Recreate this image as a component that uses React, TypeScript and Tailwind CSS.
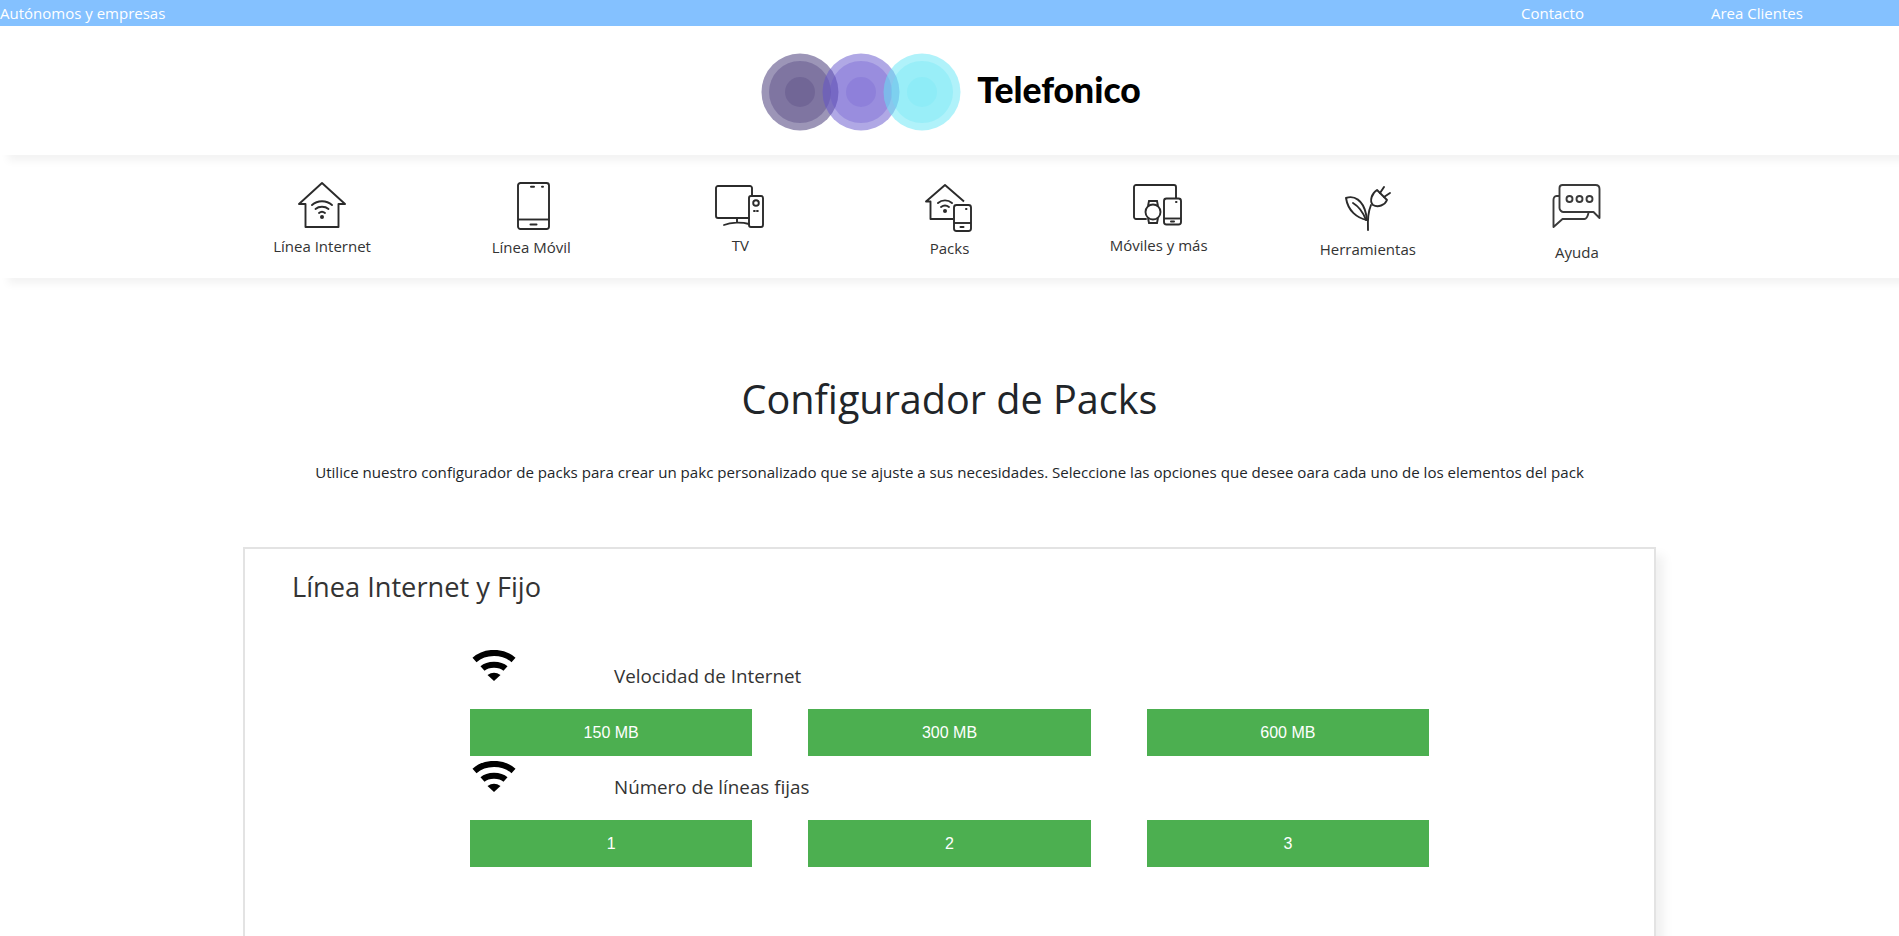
const uiFont = "font-['Open_Sans',sans-serif]";

function HouseWifiIcon() {
  return (
    <svg width="48" height="46" viewBox="0 0 48 46" fill="none" stroke="#2b2b2b" strokeWidth="1.9">
      <path d="M1 22 24 1l23 21h-6.500v23h-33V22z" strokeLinejoin="round" />
      <path d="M14 23c5.500-5 14.500-5 20 0M17.500 27c3.500-3 9.500-3 13 0M21 31c1.800-1.500 4.200-1.500 6 0" strokeLinecap="round" />
      <circle cx="24" cy="35" r="2" fill="#2b2b2b" stroke="none" />
    </svg>
  );
}

function PhoneIcon() {
  return (
    <svg width="33" height="48" viewBox="0 0 33 48" fill="none" stroke="#2b2b2b" strokeWidth="1.9" className="ml-[4px]">
      <rect x="1" y="1" width="31" height="46" rx="2.500" />
      <path d="M1 37.500h31" />
      <path d="M13.500 42.500h6M14 4.800h3M25 4.800h1" strokeLinecap="round" strokeWidth="2" />
    </svg>
  );
}

function TvIcon() {
  return (
    <svg width="49" height="43" viewBox="0 0 49 43" fill="none" stroke="#2b2b2b" strokeWidth="1.9" className="-ml-[2px]">
      <path d="M37 10V3c0-1-1-2-2-2H3C2 1 1 2 1 3v28c0 1 1 2 2 2h31" strokeLinecap="round" />
      <path d="M22 33v4M9 40c7-3 18-3 25-1" strokeLinecap="round" />
      <rect x="34" y="11" width="14" height="31" rx="2" />
      <circle cx="41" cy="18" r="2.800" />
      <path d="M39 26h.800M42 26h.800" strokeLinecap="round" strokeWidth="2" />
    </svg>
  );
}

function PacksIcon() {
  return (
    <svg width="48" height="48" viewBox="0 0 48 48" fill="none" stroke="#2b2b2b" strokeWidth="1.9">
      <path d="M28 35H5.500V17.500H1L20 1l19 16.500" strokeLinejoin="round" />
      <path d="M13 19c4-3.500 10-3.500 14 0M16 23c2.500-2 5.500-2 8 0" strokeLinecap="round" />
      <circle cx="20" cy="27" r="2" fill="#2b2b2b" stroke="none" />
      <rect x="29" y="21" width="17" height="26" rx="2.500" fill="#fff" />
      <path d="M29 39h17" />
      <path d="M35.500 43h3M41 25h.500" strokeLinecap="round" strokeWidth="2" />
    </svg>
  );
}

function DevicesIcon() {
  return (
    <svg width="49" height="42" viewBox="0 0 49 42" fill="none" stroke="#2b2b2b" strokeWidth="1.9" className="-ml-[2px]">
      <path d="M13 35H3c-1 0-2-1-2-2V3c0-1 1-2 2-2h38c1 0 2 1 2 2v11" strokeLinecap="round" />
      <circle cx="20" cy="28" r="7.500" fill="#fff" />
      <path d="M15 22l1-5h8l1 5M15 34l1 5h8l1-5" />
      <rect x="31" y="14.500" width="17" height="26" rx="2.500" fill="#fff" />
      <path d="M31 34.500h17" />
      <path d="M38 37.500h3M43 18h.500" strokeLinecap="round" strokeWidth="2" />
    </svg>
  );
}

function PlugLeafIcon() {
  return (
    <svg width="46" height="46" viewBox="0 0 46 46" fill="none" stroke="#2b2b2b" strokeWidth="1.9">
      <path d="M23 45c-.500-10 0-18 3-25" strokeLinecap="round" />
      <path d="M1 13c8-3 17 2 20 16l1 6C12 33 3 26 1 13z" strokeLinejoin="round" />
      <path d="M8 18c5 3 10 9 13 17" strokeLinecap="round" />
      <path d="M32 5 42 15c-2 5-9 8-14 5-4-4-1-12 4-15z" strokeLinejoin="round" />
      <path d="M35 8l4-6M39 12l6-4" strokeLinecap="round" />
    </svg>
  );
}

function ChatIcon() {
  return (
    <svg width="51" height="45" viewBox="0 0 50 45" fill="none" stroke="#3a3a3a" strokeWidth="1.9">
      <path d="M8 4c0-2 1-3 3-3h33c3 0 4 2 4 4v29l-6-6H12c-2 0-4-2-4-4V4z" strokeLinejoin="round" />
      <path d="M8 12H5c-2 0-3 2-3 4v27l9-8h22c2 0 3-2 4-6" strokeLinejoin="round" />
      <circle cx="18" cy="15" r="3" />
      <circle cx="28" cy="15" r="3" />
      <circle cx="38" cy="15" r="3" />
    </svg>
  );
}

function WifiIcon() {
  return (
    <svg width="44" height="31" viewBox="0 0 44 31" fill="none" stroke="#000" strokeWidth="6" className="block">
      <path d="M2.500 10C13 .500 31 .500 41.500 10" />
      <path d="M10.500 18.500C16 13.500 28 13.500 33.500 18.500" />
      <path d="M22 31 15.500 25Q22 20.500 28.500 25Z" fill="#000" stroke="none" />
    </svg>
  );
}

function Logo() {
  const circles = [
    { cx: 39, fill: "#3a2b70" },
    { cx: 100, fill: "#6251cc" },
    { cx: 161, fill: "#62e6f5" },
  ];
  return (
    <svg width="200" height="78" viewBox="0 0 200 78">
      {circles.map((c) => (
        <g key={c.cx} fill={c.fill}>
          <circle cx={c.cx} cy="39" r="38.500" opacity="0.5" />
          <circle cx={c.cx} cy="39" r="31" opacity="0.3" />
          <circle cx={c.cx} cy="39" r="15" opacity="0.2" />
        </g>
      ))}
    </svg>
  );
}

const navItems = [
  { label: "Línea Internet", icon: <HouseWifiIcon />, cls: "pt-[27px]", labelCls: "mt-[8px]" },
  { label: "Línea Móvil", icon: <PhoneIcon />, cls: "pt-[27px]", labelCls: "mt-[7px]" },
  { label: "TV", icon: <TvIcon />, cls: "pt-[30px]", labelCls: "mt-[7px]" },
  { label: "Packs", icon: <PacksIcon />, cls: "pt-[29px]", labelCls: "mt-[6px]" },
  { label: "Móviles y más", icon: <DevicesIcon />, cls: "pt-[29px]", labelCls: "mt-[9px]" },
  { label: "Herramientas", icon: <PlugLeafIcon />, cls: "pt-[30px]", labelCls: "mt-[8px]" },
  { label: "Ayuda", icon: <ChatIcon />, cls: "pt-[29px]", labelCls: "mt-[13px]" },
];

function OptionRow({ title, options }: { title: string; options: string[] }) {
  return (
    <div className="ml-[178px] w-[959px]">
      <div className="flex h-[64px] items-start">
        <div className="w-[144px] pl-[2px] pt-[5px]">
          <WifiIcon />
        </div>
        <span className="mt-[19px] text-[18.8px] leading-[24px] text-[#333]">{title}</span>
      </div>
      <div className="grid grid-cols-3 gap-x-[56px]">
        {options.map((o) => (
          <button
            key={o}
            type="button"
            className="h-[47px] bg-[#4caf50] font-['Liberation_Sans',sans-serif] text-base text-white"
          >
            {o}
          </button>
        ))}
      </div>
    </div>
  );
}

export default function App() {
  return (
    <div className={`h-screen overflow-hidden bg-white text-[#212529] ${uiFont}`}>
      <div className="flex h-[26px] items-center justify-between bg-[#84c1ff] text-[15px] text-white">
        <span>Autónomos y empresas</span>
        <div className="flex">
          <span className="w-[190px]">Contacto</span>
          <span className="w-[188px]">Area Clientes</span>
        </div>
      </div>

      <header className="relative z-10 flex h-[129px] items-center justify-center gap-[16px] bg-white pl-[3px] pt-[3px] shadow-[8px_6px_8px_rgba(0,0,0,0.05)]">
        <Logo />
        <span className="mb-[4px] font-['Lato',sans-serif] text-[35.5px] font-black leading-none text-black">Telefonico</span>
      </header>

      <nav className="flex h-[123px] justify-center bg-white shadow-[8px_6px_8px_rgba(0,0,0,0.05)]">
        <div className="grid w-[1464px] grid-cols-7">
          {navItems.map((item) => (
            <div key={item.label} className={`flex flex-col items-center ${item.cls}`}>
              {item.icon}
              <span className={`text-[15px] leading-[20px] text-[#333] ${item.labelCls}`}>{item.label}</span>
            </div>
          ))}
        </div>
      </nav>

      <main className="flex flex-col items-center">
        <h1 className="mt-[97px] text-[39.6px] leading-[48px]">Configurador de Packs</h1>
        <p className="mt-[38px] text-[15.1px] leading-[22px]">
          Utilice nuestro configurador de packs para crear un pakc personalizado que se ajuste a sus necesidades. Seleccione las opciones que desee oara cada uno de los elementos del pack
        </p>
        <section className="mt-[64px] h-[600px] w-[1413px] border-2 border-[#e3e3e3] pl-[47px] pt-[18px] shadow-[8px_8px_10px_rgba(0,0,0,0.06)]">
          <h2 className="text-[27.2px] leading-[40px] text-[#333]">Línea Internet y Fijo</h2>
          <div className="mt-[38px]">
            <OptionRow title="Velocidad de Internet" options={["150 MB", "300 MB", "600 MB"]} />
            <OptionRow title="Número de líneas fijas" options={["1", "2", "3"]} />
          </div>
        </section>
      </main>
    </div>
  );
}
